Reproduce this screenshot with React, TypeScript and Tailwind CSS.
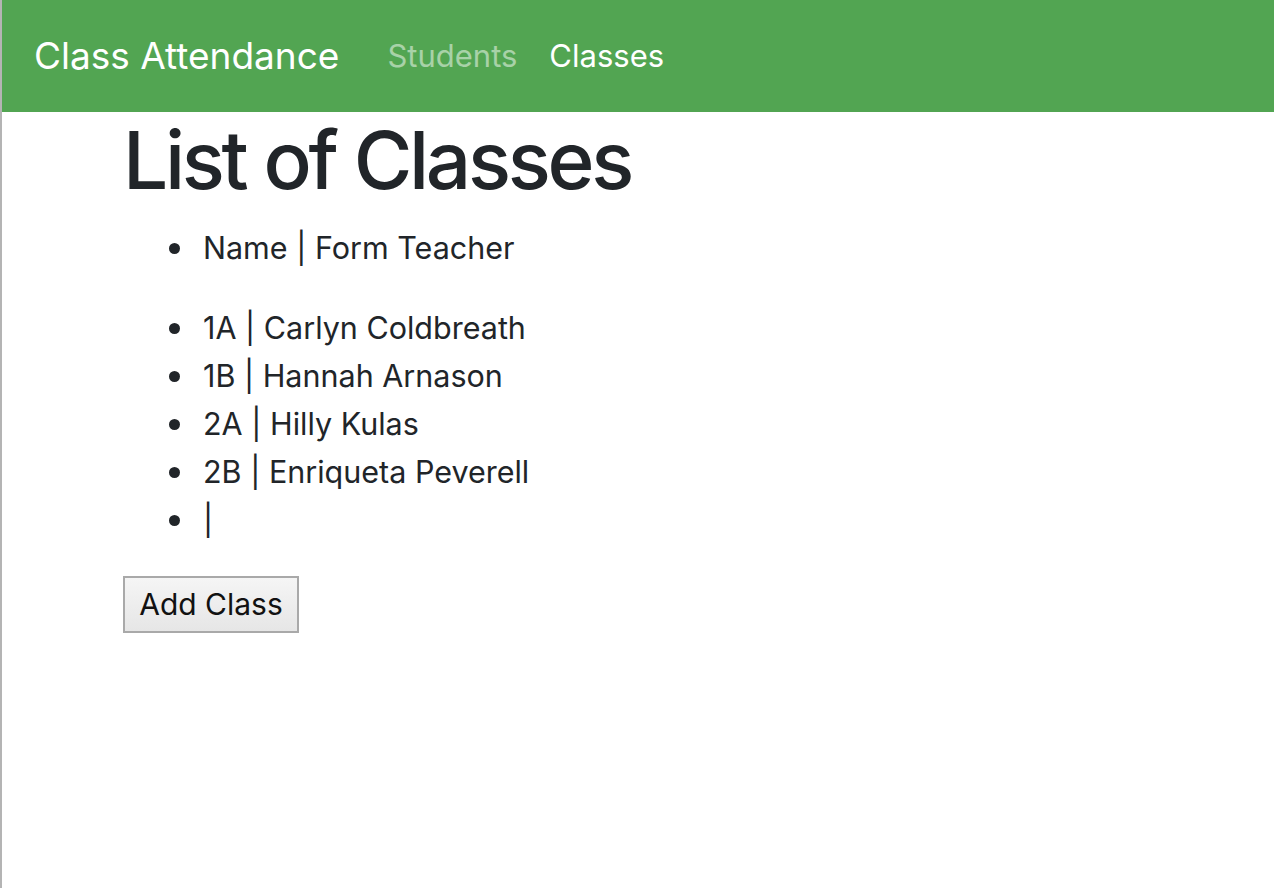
const CLASSES = [
  { name: "1A", teacher: "Carlyn Coldbreath" },
  { name: "1B", teacher: "Hannah Arnason" },
  { name: "2A", teacher: "Hilly Kulas" },
  { name: "2B", teacher: "Enriqueta Peverell" },
  { name: "", teacher: "" },
];

function Item({ children }: { children: React.ReactNode }) {
  return (
    <li className="flex items-center">
      <span className="mr-[23px] h-[11px] w-[11px] shrink-0 rounded-full bg-[#212529]" />
      <span>{children}</span>
    </li>
  );
}

export default function App() {
  return (
    <div className="flex min-h-[888px] bg-white font-['Inter',sans-serif] text-[#212529]">
      <div className="w-[2px] shrink-0 bg-[#b4b4b4]" />
      <div className="flex-1">
        <nav className="flex h-[112px] items-center bg-[#52a552] pl-[32px]">
          <span className="text-[37px] text-white">Class Attendance</span>
          <div className="ml-[48px] flex gap-[32px] text-[31px]">
            <span className="text-white/50">Students</span>
            <span className="text-white">Classes</span>
          </div>
        </nav>
        <main className="pl-[121px]">
          <h1 className="mb-[16px] text-[80px] font-medium leading-[96px] tracking-[-3.3px]">List of Classes</h1>
          <ul className="mb-[32px] pl-[46px] text-[30.5px] leading-[48px]">
            <Item>Name | Form Teacher</Item>
          </ul>
          <ul className="mb-[32px] pl-[46px] text-[30.5px] leading-[48px]">
            {CLASSES.map((c, i) => (
              <Item key={i}>
                {c.name} | {c.teacher}
              </Item>
            ))}
          </ul>
          <button className="h-[57px] w-[176px] border-2 border-[#a9a9a9] bg-gradient-to-b from-[#f5f5f5] to-[#e6e6e6] text-[30px] text-[#111]">
            Add Class
          </button>
        </main>
      </div>
    </div>
  );
}
